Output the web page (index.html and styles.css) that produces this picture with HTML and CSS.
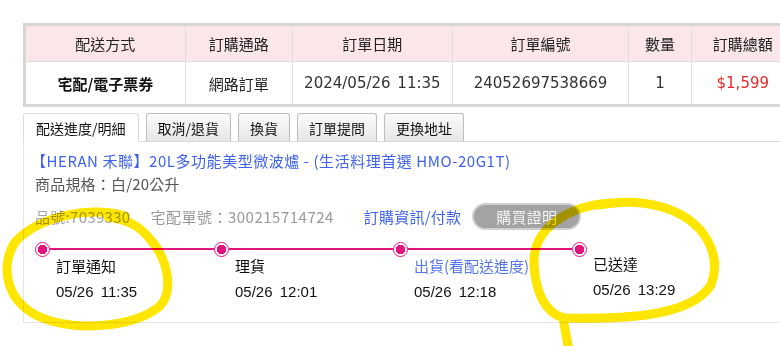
FILE: index.html
```html
<!DOCTYPE html>
<html lang="zh-Hant">
<head>
<meta charset="utf-8">
<link rel="stylesheet" href="styles.css">
</head>
<body>
<div class="page">
  <table class="order">
    <colgroup>
      <col class="c1"><col class="c2"><col class="c3"><col class="c4"><col class="c5"><col class="c6">
    </colgroup>
    <thead>
      <tr><th>配送方式</th><th>訂購通路</th><th>訂單日期</th><th>訂單編號</th><th>數量</th><th>訂購總額</th></tr>
    </thead>
    <tbody>
      <tr>
        <td class="bold">宅配/電子票券</td>
        <td>網路訂單</td>
        <td class="num">2024/05/26 11:35</td>
        <td class="num">24052697538669</td>
        <td class="num">1</td>
        <td class="num price">$1,599</td>
      </tr>
    </tbody>
  </table>

  <div class="tabs">
    <div class="tab active">配送進度/明細</div>
    <div class="tab">取消/退貨</div>
    <div class="tab">換貨</div>
    <div class="tab">訂單提問</div>
    <div class="tab">更換地址</div>
  </div>

  <div class="panel">
    <div class="title">【HERAN 禾聯】20L多功能美型微波爐 - (生活料理首選 HMO-20G1T)</div>
    <div class="spec">商品規格：白/20公升</div>
    <div class="info">
      <span class="sku">品號:7039330</span>
      <span class="ship">宅配單號：300215714724</span>
      <span class="pay">訂購資訊/付款</span>
      <span class="proof">購買證明</span>
    </div>
    <div class="timeline">
      <div class="step">
        <div class="track"><span class="dot"></span><span class="line"></span></div>
        <div class="label">訂單通知</div>
        <div class="time">05/26 11:35</div>
      </div>
      <div class="step">
        <div class="track"><span class="dot"></span><span class="line"></span></div>
        <div class="label">理貨</div>
        <div class="time">05/26 12:01</div>
      </div>
      <div class="step">
        <div class="track"><span class="dot"></span><span class="line"></span></div>
        <div class="label link">出貨(看配送進度)</div>
        <div class="time">05/26 12:18</div>
      </div>
      <div class="step last">
        <div class="track"><span class="dot"></span></div>
        <div class="label">已送達</div>
        <div class="time">05/26 13:29</div>
      </div>
    </div>
  </div>

  <svg class="marks" width="780" height="346" viewBox="0 0 780 346">
    <path d="M125 216 C90 206 40 216 16 241 C0 263 4 301 40 317 C72 331 132 329 160 306 C174 291 168 259 150 239 C140 227 130 220 108 217" />
    <path d="M612 203 C572 205 532 226 534 265 C536 296 546 312 563 318 L568 346" />
    <path d="M563 318 C620 319 690 318 711 285 C722 255 706 220 662 207 C640 201 620 201 598 205" />
  </svg>
</div>
</body>
</html>
```
FILE: styles.css
```css
html, body {
  margin: 0;
  padding: 0;
  background: #fff;
  overflow: hidden;
}

.page {
  position: relative;
  width: 780px;
  height: 346px;
  padding: 23px 0 0 23px;
  box-sizing: border-box;
  font-family: "Noto Sans CJK TC", "Noto Sans", sans-serif;
  color: #333;
}

.order {
  border-collapse: collapse;
  border: 3px solid #d6d6d6;
  width: 774px;
  table-layout: fixed;
  font-size: 15px;
}
.c1 { width: 160px; }
.c2 { width: 107px; }
.c3 { width: 159px; }
.c4 { width: 176px; }
.c5 { width: 62px; }
.c6 { width: 104px; }

.order th, .order td {
  border: 1px solid #dddddd;
  text-align: center;
  padding: 0;
  white-space: nowrap;
}
.order th {
  background: #fbe6e9;
  font-weight: normal;
  height: 35px;
  color: #222;
}
.order td {
  height: 42px;
  color: #222;
}
.order td.bold {
  font-weight: bold;
  color: #111;
}
.order td.num {
  font-family: "DejaVu Sans", sans-serif;
  font-size: 15px;
  color: #333;
  word-spacing: 2px;
}
.order td.price {
  color: #e8262a;
}

.tabs {
  display: flex;
  gap: 7px;
  margin-top: 5px;
  height: 29px;
  align-items: flex-end;
  border-bottom: 1px solid #dadada;
  font-size: 14px;
}
.tab {
  height: 28px;
  line-height: 28px;
  padding: 0 11px;
  border: 1px solid #bdbdbd;
  border-bottom: none;
  border-radius: 3px 3px 0 0;
  background: linear-gradient(#fbfbfb, #e6e6e6);
  color: #111;
  box-sizing: border-box;
}
.tab.active {
  background: #fff;
  border-color: #dcdcdc;
  height: 29px;
  margin-bottom: -1px;
  line-height: 29px;
  padding: 0 12px;
}

.panel {
  border-left: 1px solid #e6e6e6;
  border-bottom: 1px solid #e6e6e6;
  height: 181px;
  box-sizing: border-box;
  padding: 8px 0 0 11px;
  font-size: 15px;
}
.title {
  color: #3f63ee;
  line-height: 22px;
  height: 22px;
  margin-left: -4px;
  white-space: nowrap;
  letter-spacing: 0.55px;
}
.spec {
  color: #555;
  line-height: 22px;
  height: 22px;
  margin-top: 1px;
  letter-spacing: 0.2px;
}
.info {
  display: flex;
  align-items: center;
  height: 28px;
  margin-top: 7px;
  white-space: nowrap;
  letter-spacing: 0.3px;
}
.sku { color: #a3a3a3; }
.ship { color: #999; margin-left: 20px; letter-spacing: 0.5px; }
.pay { color: #3f63ee; margin-left: 30px; letter-spacing: 0.2px; }
.proof {
  margin-left: 11px;
  height: 27px;
  line-height: 23px;
  padding: 0 22px;
  box-sizing: border-box;
  border: 2px solid #cfcfcf;
  border-radius: 14px;
  background: #a3a3a3;
  color: #f2f2f2;
  letter-spacing: 0.3px;
}

.timeline {
  display: flex;
  margin-top: 11px;
  margin-left: 0;
}
.step {
  width: 179px;
  flex: none;
}
.step.last { width: 160px; }
.track {
  display: flex;
  align-items: center;
  height: 16px;
}
.dot {
  width: 15px;
  height: 15px;
  box-sizing: border-box;
  border: 1px solid #e4147f;
  border-radius: 50%;
  background: radial-gradient(circle, #e4147f 0 4.6px, #fff 5px);
  flex: none;
}
.line {
  flex: 1;
  height: 2px;
  background: #e4147f;
}
.label {
  margin-left: 21px;
  margin-top: -2px;
  line-height: 22px;
  color: #111;
  white-space: nowrap;
}
.label.link { color: #5577ee; }
.time {
  margin-left: 21px;
  margin-top: 4px;
  line-height: 22px;
  font-family: "Liberation Sans", Arial, sans-serif;
  font-size: 15px;
  color: #111;
  word-spacing: 3px;
}
.step.last .label { margin-top: -4px; }
.step.last .time { margin-top: 4px; }

.marks {
  position: absolute;
  left: 0;
  top: 0;
  pointer-events: none;
  mix-blend-mode: multiply;
}
.marks path {
  fill: none;
  stroke: #ffe600;
  stroke-width: 9;
  stroke-linecap: round;
  stroke-linejoin: round;
}
```
